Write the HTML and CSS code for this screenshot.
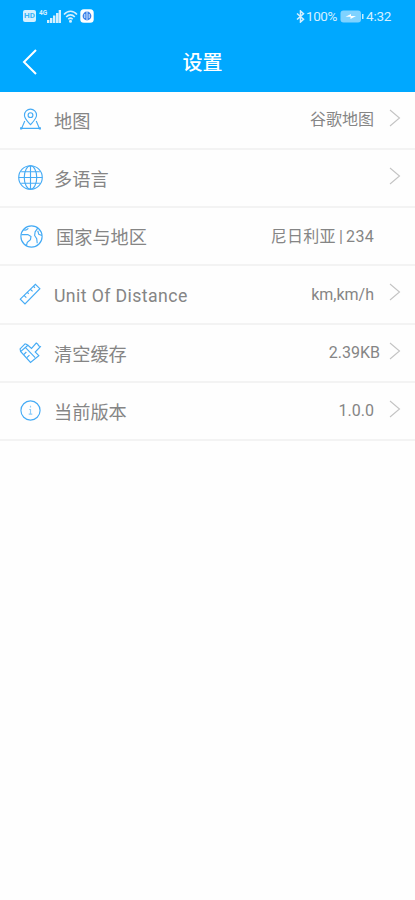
FILE: index.html
```html
<!DOCTYPE html>
<html lang="zh-CN">
<head>
  <meta charset="utf-8">
  <meta name="viewport" content="width=device-width, initial-scale=1">
  <title>设置</title>
  <link rel="stylesheet" href="styles.css">
</head>
<body>

  <header>
    <div class="statusBar">
      <div class="statusLeft">
        <span class="hd">HD</span>
        <span class="network">4G</span>
        <svg class="signal" width="14" height="13" viewBox="0 0 14 13" fill="currentColor">
          <path d="M0 10h2.400v3H0zM3 8h2.400v5H3zM6 5.500h2.400V13H6zM9 3h2.400v10H9zM11.700 0H14v13h-2.300z"/>
        </svg>
        <svg class="wifi" width="15" height="13" viewBox="0 0 15 13" fill="none" stroke="currentColor" stroke-width="1.6">
          <path d="M1 4.5C4.7.2 10.3.2 14 4.5M3.2 7c2.6-2.9 6-2.9 8.6 0M5.3 9.3c1.4-1.4 3-1.4 4.4 0"/>
          <circle cx="7.500" cy="11.300" r=".7" fill="currentColor"/>
        </svg>
        <svg class="appBadge" width="14" height="14" viewBox="0 0 14 14">
          <rect x=".3" y=".3" width="13.400" height="13.400" rx="3.500" fill="#fff"/>
          <circle cx="7" cy="7" r="4.400" fill="#3b80e8"/>
          <path d="M7 2.200v9.600M4.800 5v4M9.200 5v4" stroke="#d8e9ff"/>
        </svg>
      </div>
      <div class="statusRight">
        <svg class="bluetooth" width="9" height="13" viewBox="0 0 9 13" fill="none" stroke="currentColor" stroke-width="1.5">
          <path d="M1 3.5l6.500 5.700-3 2.800V1l3 2.800L1 9.500"/>
        </svg>
        <span class="percent">100%</span>
        <svg class="battery" width="24" height="13" viewBox="0 0 24 13">
          <rect x=".5" y=".5" width="20.500" height="12" rx="3" fill="#7fd2ff"/>
          <path d="M22 4h1.500v5H22z" fill="#c9edff"/>
          <path d="M5.500 6.800l5.500-2.800v2h5l-5.500 3v-2.200z" fill="#fff"/>
        </svg>
        <span class="time">4:32</span>
      </div>
    </div>
    <div class="titleBar">
      <svg class="back" width="16" height="26" viewBox="0 0 16 26" fill="none" stroke="#fff" stroke-width="2">
        <path d="M14 1L2 13l12 12"/>
      </svg>
      <h1>设置</h1>
    </div>
  </header>

  <main>
    <div class="row">
      <svg class="icon" viewBox="0 0 24 24">
        <path d="M12 17C8.500 13 6.200 10.800 6.200 7.800a5.800 5.800 0 0 1 11.600 0c0 3-2.300 5.200-5.800 9.200z"/>
        <circle cx="12" cy="7.800" r="2.300"/>
        <path d="M6.500 13.500L3.500 20.500h17l-3-7"/>
        <path class="dot" d="M3 19.500v2M21 19.500v2"/>
      </svg>
      <span class="label">地图</span>
      <span class="value">谷歌地图</span>
      <svg class="arrow" viewBox="0 0 12 18"><path d="M1 1l9.500 8L1 17"/></svg>
    </div>
    <div class="row">
      <svg class="icon" viewBox="0 0 24 24">
        <circle cx="12" cy="12" r="11.300"/>
        <ellipse cx="12" cy="12" rx="6" ry="11.300"/>
        <path d="M12 .7v22.600M.7 12h22.600M3 6.500h18M3 17.500h18"/>
      </svg>
      <span class="label">多语言</span>
      <span class="value"></span>
      <svg class="arrow" viewBox="0 0 12 18"><path d="M1 1l9.500 8L1 17"/></svg>
    </div>
    <div class="row country">
      <svg class="icon" viewBox="0 0 24 24">
        <circle cx="12" cy="12" r="10.200"/>
        <path d="M2.500 10.200h6l3 1.800-.5 3-3 2.500-1 3.500M4.500 5.500c2 1.200 3 .2 4.500-1.300M18 4l-2.500 3.500-.5 3.500 2 3 .5 4.500M22 11l-3-1-1-3.500"/>
      </svg>
      <span class="label">国家与地区</span>
      <span class="value">尼日利亚<i>|</i>234</span>
      <span class="arrow"></span>
    </div>
    <div class="row unit">
      <svg class="icon" viewBox="0 0 24 24">
        <path d="M2.200 16.500L16.700 2.200l4.300 4.200L6.700 21zM6 13l2 2M9 10l1.300 1.300M12 7l2 2M15 4.200l1.300 1.300"/>
      </svg>
      <span class="label">Unit Of Distance</span>
      <span class="value">km,km/h</span>
      <svg class="arrow" viewBox="0 0 12 18"><path d="M1 1l9.500 8L1 17"/></svg>
    </div>
    <div class="row cache">
      <svg class="icon" viewBox="0 0 24 24">
        <path d="M9.500 5L13 8l4.500-5 1.500 1 .8 1.500 1.700.8-5 5.200 3.500 3.500-8 6.500L2.500 11z"/>
        <path d="M7 7l9.500 10M5.500 14l2.500-2.500M8.500 17l2.500-2.500M7 3.500L9.500 5M2.500 11L2 8.500 7 3.500"/>
      </svg>
      <span class="label">清空缓存</span>
      <span class="value">2.39KB</span>
      <svg class="arrow" viewBox="0 0 12 18"><path d="M1 1l9.500 8L1 17"/></svg>
    </div>
    <div class="row version">
      <svg class="icon" viewBox="0 0 24 24">
        <circle cx="12" cy="12" r="9.200"/>
        <path class="faint" d="M12 7.500v1.500M10.800 11H12v4.500M10.300 15.500h3.400"/>
      </svg>
      <span class="label">当前版本</span>
      <span class="value">1.0.0</span>
      <svg class="arrow" viewBox="0 0 12 18"><path d="M1 1l9.500 8L1 17"/></svg>
    </div>
  </main>

</body>
</html>
```
FILE: styles.css
```css
* {
  box-sizing: border-box;
}

body {
  margin: 0;
  min-height: 100vh;
  background: #fefefe;
  color: #858585;
  font-family: Roboto, "Noto Sans CJK SC", sans-serif;
}

svg {
  display: block;
  flex: none;
}

header {
  height: 91.5px;
  background: #00a8ff;
  color: #fff;
}

.statusBar {
  display: flex;
  justify-content: space-between;
  height: 32px;
  padding: 0 23px 0 24px;
  color: #d5f0ff;
}

.statusLeft, .statusRight {
  display: flex;
  align-items: center;
}

.statusLeft {
  margin-left: -1px;
}

.hd {
  width: 13px;
  height: 12px;
  border-radius: 2px;
  background: #d5f0ff;
  color: #35b5fa;
  font-size: 8px;
  font-weight: 700;
  line-height: 12px;
  text-align: center;
}

.network {
  width: 8px;
  margin: -6px 0 0 3px;
  font-size: 6.5px;
  font-weight: 700;
}

.wifi {
  margin-left: 2px;
}

.appBadge {
  margin-left: 2px;
}

.percent, .time {
  font-size: 13.5px;
  line-height: 16px;
}

.percent {
  width: 32px;
  margin-left: 1px;
  letter-spacing: -0.4px;
}

.battery {
  margin: 0 2px;
}

.time {
  width: 26px;
  letter-spacing: -0.2px;
}

.titleBar {
  display: grid;
  grid-template-columns: 60px 1fr 60px;
  align-items: center;
  height: 60px;
}

.back {
  margin-left: 22px;
}

h1 {
  margin: 2px 0 0 -10px;
  font-size: 20px;
  font-weight: 500;
  line-height: 28px;
  text-align: center;
}

.row {
  display: flex;
  align-items: center;
  height: 58.25px;
  padding: 0 14px 0 18px;
  border-bottom: 2px solid #f3f3f3;
}

.icon {
  width: 25px;
  height: 25px;
  fill: none;
  stroke: #45abf5;
  stroke-width: 1.1;
}

.icon .dot {
  stroke-width: 2;
}

.icon .faint {
  opacity: 0.6;
}

.label {
  flex: 1;
  margin: 4px 0 0 11px;
  font-size: 18.2px;
  line-height: 26px;
}

.value {
  margin: 1px 15px 0 0;
  font-size: 16px;
  line-height: 24px;
}

.value i {
  margin: 0 3px;
  font-style: normal;
}

.arrow {
  width: 12px;
  height: 18px;
  margin-top: -4px;
  fill: none;
  stroke: #c4c4c4;
  stroke-width: 1.1;
}

.country .icon {
  margin-left: 1px;
}

.country .label {
  margin-left: 12px;
}

.country .value {
  letter-spacing: 0.3px;
}

.unit .label {
  font-size: 17.7px;
  letter-spacing: 0.4px;
}

.cache .value {
  margin-right: 9px;
}
```
